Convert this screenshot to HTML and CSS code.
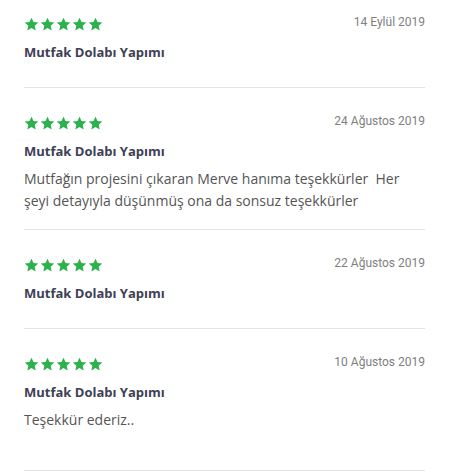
FILE: index.html
```html
<!DOCTYPE html>
<html lang="tr">
<head>
<meta charset="utf-8">
<link rel="stylesheet" href="styles.css">
</head>
<body>
<div class="reviews">
  <div class="review">
    <div class="review-head">
      <div class="stars">
        <svg class="star" viewBox="0 0 24 24"><polygon points="12,1 15.2,8 22.8,8.8 17.1,13.9 18.7,21.5 12,17.6 5.3,21.5 6.9,13.9 1.2,8.8 8.8,8"/></svg>
        <svg class="star" viewBox="0 0 24 24"><polygon points="12,1 15.2,8 22.8,8.8 17.1,13.9 18.7,21.5 12,17.6 5.3,21.5 6.9,13.9 1.2,8.8 8.8,8"/></svg>
        <svg class="star" viewBox="0 0 24 24"><polygon points="12,1 15.2,8 22.8,8.8 17.1,13.9 18.7,21.5 12,17.6 5.3,21.5 6.9,13.9 1.2,8.8 8.8,8"/></svg>
        <svg class="star" viewBox="0 0 24 24"><polygon points="12,1 15.2,8 22.8,8.8 17.1,13.9 18.7,21.5 12,17.6 5.3,21.5 6.9,13.9 1.2,8.8 8.8,8"/></svg>
        <svg class="star" viewBox="0 0 24 24"><polygon points="12,1 15.2,8 22.8,8.8 17.1,13.9 18.7,21.5 12,17.6 5.3,21.5 6.9,13.9 1.2,8.8 8.8,8"/></svg>
      </div>
      <span class="date">14 Eylül 2019</span>
    </div>
    <div class="title">Mutfak Dolabı Yapımı</div>
  </div>
  <div class="review">
    <div class="review-head">
      <div class="stars">
        <svg class="star" viewBox="0 0 24 24"><polygon points="12,1 15.2,8 22.8,8.8 17.1,13.9 18.7,21.5 12,17.6 5.3,21.5 6.9,13.9 1.2,8.8 8.8,8"/></svg>
        <svg class="star" viewBox="0 0 24 24"><polygon points="12,1 15.2,8 22.8,8.8 17.1,13.9 18.7,21.5 12,17.6 5.3,21.5 6.9,13.9 1.2,8.8 8.8,8"/></svg>
        <svg class="star" viewBox="0 0 24 24"><polygon points="12,1 15.2,8 22.8,8.8 17.1,13.9 18.7,21.5 12,17.6 5.3,21.5 6.9,13.9 1.2,8.8 8.8,8"/></svg>
        <svg class="star" viewBox="0 0 24 24"><polygon points="12,1 15.2,8 22.8,8.8 17.1,13.9 18.7,21.5 12,17.6 5.3,21.5 6.9,13.9 1.2,8.8 8.8,8"/></svg>
        <svg class="star" viewBox="0 0 24 24"><polygon points="12,1 15.2,8 22.8,8.8 17.1,13.9 18.7,21.5 12,17.6 5.3,21.5 6.9,13.9 1.2,8.8 8.8,8"/></svg>
      </div>
      <span class="date">24 Ağustos 2019</span>
    </div>
    <div class="title">Mutfak Dolabı Yapımı</div>
    <p class="body">Mutfağın projesini çıkaran Merve hanıma teşekkürler&nbsp; Her şeyi detayıyla düşünmüş ona da sonsuz teşekkürler</p>
  </div>
  <div class="review">
    <div class="review-head">
      <div class="stars">
        <svg class="star" viewBox="0 0 24 24"><polygon points="12,1 15.2,8 22.8,8.8 17.1,13.9 18.7,21.5 12,17.6 5.3,21.5 6.9,13.9 1.2,8.8 8.8,8"/></svg>
        <svg class="star" viewBox="0 0 24 24"><polygon points="12,1 15.2,8 22.8,8.8 17.1,13.9 18.7,21.5 12,17.6 5.3,21.5 6.9,13.9 1.2,8.8 8.8,8"/></svg>
        <svg class="star" viewBox="0 0 24 24"><polygon points="12,1 15.2,8 22.8,8.8 17.1,13.9 18.7,21.5 12,17.6 5.3,21.5 6.9,13.9 1.2,8.8 8.8,8"/></svg>
        <svg class="star" viewBox="0 0 24 24"><polygon points="12,1 15.2,8 22.8,8.8 17.1,13.9 18.7,21.5 12,17.6 5.3,21.5 6.9,13.9 1.2,8.8 8.8,8"/></svg>
        <svg class="star" viewBox="0 0 24 24"><polygon points="12,1 15.2,8 22.8,8.8 17.1,13.9 18.7,21.5 12,17.6 5.3,21.5 6.9,13.9 1.2,8.8 8.8,8"/></svg>
      </div>
      <span class="date">22 Ağustos 2019</span>
    </div>
    <div class="title">Mutfak Dolabı Yapımı</div>
  </div>
  <div class="review">
    <div class="review-head">
      <div class="stars">
        <svg class="star" viewBox="0 0 24 24"><polygon points="12,1 15.2,8 22.8,8.8 17.1,13.9 18.7,21.5 12,17.6 5.3,21.5 6.9,13.9 1.2,8.8 8.8,8"/></svg>
        <svg class="star" viewBox="0 0 24 24"><polygon points="12,1 15.2,8 22.8,8.8 17.1,13.9 18.7,21.5 12,17.6 5.3,21.5 6.9,13.9 1.2,8.8 8.8,8"/></svg>
        <svg class="star" viewBox="0 0 24 24"><polygon points="12,1 15.2,8 22.8,8.8 17.1,13.9 18.7,21.5 12,17.6 5.3,21.5 6.9,13.9 1.2,8.8 8.8,8"/></svg>
        <svg class="star" viewBox="0 0 24 24"><polygon points="12,1 15.2,8 22.8,8.8 17.1,13.9 18.7,21.5 12,17.6 5.3,21.5 6.9,13.9 1.2,8.8 8.8,8"/></svg>
        <svg class="star" viewBox="0 0 24 24"><polygon points="12,1 15.2,8 22.8,8.8 17.1,13.9 18.7,21.5 12,17.6 5.3,21.5 6.9,13.9 1.2,8.8 8.8,8"/></svg>
      </div>
      <span class="date">10 Ağustos 2019</span>
    </div>
    <div class="title">Mutfak Dolabı Yapımı</div>
    <p class="body">Teşekkür ederiz..</p>
  </div>
</div>
</body>
</html>
```
FILE: styles.css
```css
html, body {
  margin: 0;
  padding: 0;
  background: #ffffff;
}

.reviews {
  width: 401px;
  margin-left: 24px;
  font-family: "Open Sans", Lato, sans-serif;
}

.review {
  padding: 29px 0 17px;
  border-bottom: 1px solid #e3e3e3;
}

.review:first-child {
  padding-top: 18px;
}

.review-head {
  display: flex;
  justify-content: space-between;
  align-items: flex-start;
  height: 13px;
}

.stars {
  display: flex;
  gap: 1px;
}

.star {
  width: 15px;
  height: 15px;
  fill: #2bb24c;
  display: block;
  margin-top: -1px;
}

.date {
  font-family: Roboto, "Liberation Sans", sans-serif;
  font-size: 12px;
  line-height: 13px;
  color: #808080;
  margin-top: -2px;
}

.title {
  margin: 11px 0 8px;
  font-size: 13px;
  line-height: 20px;
  font-weight: 700;
  color: #3e4055;
}

.body {
  margin: -1px 0 0;
  min-height: 44px;
  font-size: 14px;
  line-height: 22px;
  color: #555555;
}
```
